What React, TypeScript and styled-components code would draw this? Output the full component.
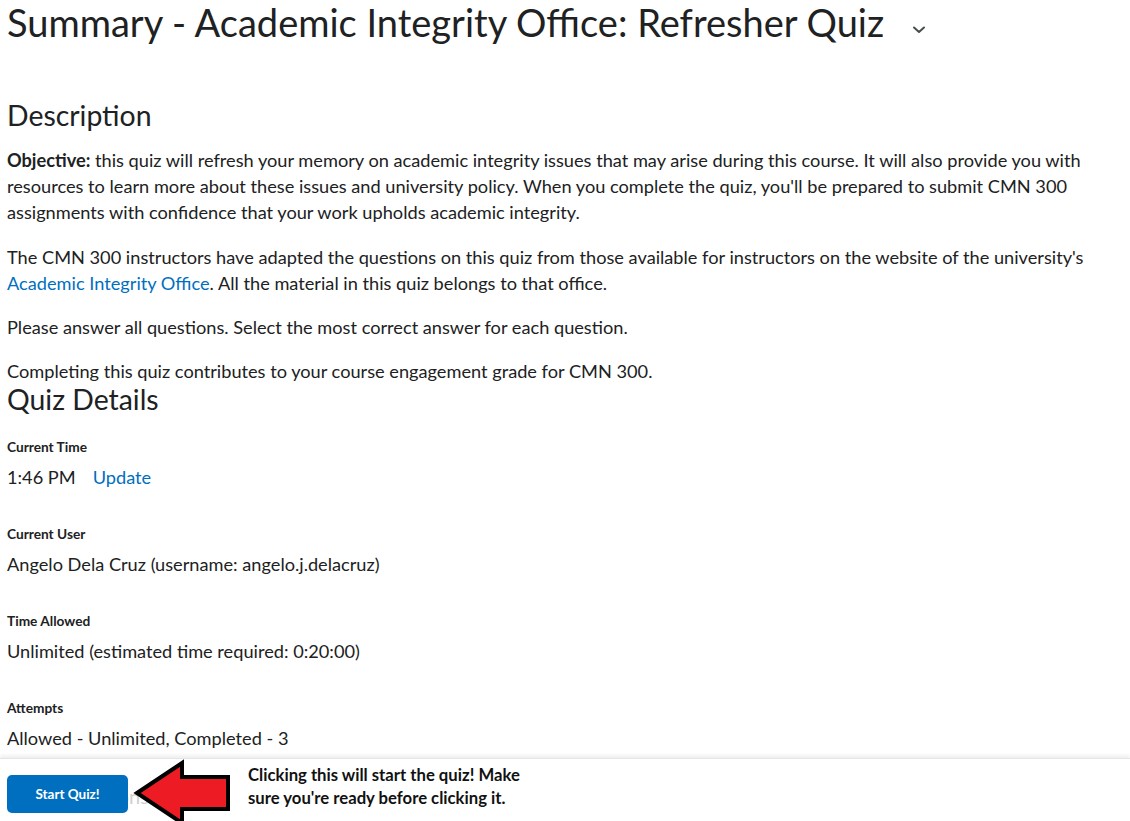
import styled, { createGlobalStyle } from 'styled-components';

const GlobalStyle = createGlobalStyle`
  html, body {
    margin: 0;
    padding: 0;
    background: #ffffff;
  }
  body {
    font-family: Lato, "Open Sans", sans-serif;
    color: #202122;
  }
  * {
    box-sizing: border-box;
  }
`;

const Page = styled.div`
  display: flex;
  flex-direction: column;
  height: 821px;
  overflow: hidden;
`;

const Content = styled.main`
  flex: 1;
  overflow: hidden;
  padding: 0 14px 0 7px;
`;

const TitleRow = styled.div`
  display: flex;
  align-items: center;
  gap: 28px;
  height: 44px;
`;

const Title = styled.h1`
  margin: 0;
  font-size: 38px;
  font-weight: 400;
  line-height: 44px;
  color: #202122;
  white-space: nowrap;
`;

const Chevron = styled.svg`
  width: 14px;
  height: 10px;
  margin-top: 16px;
`;

const SectionTitle = styled.h2<{ $top: number }>`
  margin: ${p => p.$top}px 0 0 0;
  font-size: 28.4px;
  font-weight: 400;
  line-height: 34px;
  color: #202122;
`;

const Para = styled.p<{ $top: number }>`
  margin: ${p => p.$top}px 0 0 0;
  font-size: 18.2px;
  line-height: 26px;
  color: #202122;
`;

const Link = styled.a`
  color: #006fbf;
  text-decoration: none;
`;

const Field = styled.div`
  display: flex;
  flex-direction: column;
  margin-top: 21px;
  & + & {
    margin-top: 34px;
  }
`;

const Label = styled.div`
  font-size: 13.7px;
  font-weight: 700;
  line-height: 20px;
  color: #202122;
`;

const Value = styled.div`
  display: flex;
  gap: 17px;
  font-size: 18.2px;
  line-height: 26px;
  margin-top: 7px;
  white-space: nowrap;
`;

const Footer = styled.footer`
  position: relative;
  flex: 0 0 63px;
  height: 63px;
  background: #ffffff;
  border-top: 1px solid #e3e5e8;
  box-shadow: 0 -3px 3px rgba(0, 0, 0, 0.06);
  display: flex;
  align-items: flex-start;
  padding: 16px 7px 0;
`;

const Ghost = styled.span`
  position: absolute;
  left: 45px;
  top: 25px;
  font-size: 20px;
  line-height: 24px;
  color: #cfcfcf;
`;

const StartButton = styled.button`
  position: relative;
  flex: 0 0 121px;
  height: 38px;
  border: none;
  border-radius: 5px;
  background: #006fbf;
  color: #ffffff;
  font-family: Lato, "Open Sans", sans-serif;
  font-size: 13.5px;
  font-weight: 700;
  cursor: pointer;
`;

const Arrow = styled.svg`
  position: absolute;
  left: 133px;
  top: 0;
  width: 100px;
  height: 68px;
  overflow: visible;
`;

const Note = styled.div`
  margin-left: 120px;
  margin-top: -11px;
  font-family: Lato, "Open Sans", sans-serif;
  font-size: 16.7px;
  font-weight: 700;
  line-height: 23px;
  color: #111;
  white-space: nowrap;
`;

const App = () => {
  return (
    <>
      <GlobalStyle />
      <Page>
        <Content>
          <TitleRow>
            <Title>Summary - Academic Integrity Office: Refresher Quiz</Title>
            <Chevron viewBox="0 0 14 10">
              <path d="M2 2.5 L7 7 L12 2.5" fill="none" stroke="#494c4e" strokeWidth="2" strokeLinecap="round" strokeLinejoin="round" />
            </Chevron>
          </TitleRow>
          <SectionTitle $top={54}>Description</SectionTitle>
          <Para $top={15}>
            <b>Objective:</b> this quiz will refresh your memory on academic integrity issues that may arise during this course. It will also provide you with resources to learn more about these issues and university policy. When you complete the quiz, you'll be prepared to submit CMN 300 assignments with confidence that your work upholds academic integrity.
          </Para>
          <Para $top={19}>
            The CMN 300 instructors have adapted the questions on this quiz from those available for instructors on the website of the university's <Link href="#">Academic Integrity Office</Link>. All the material in this quiz belongs to that office.
          </Para>
          <Para $top={18}>Please answer all questions. Select the most correct answer for each question.</Para>
          <Para $top={18}>Completing this quiz contributes to your course engagement grade for CMN 300.</Para>
          <SectionTitle $top={-2}>Quiz Details</SectionTitle>
          <Field>
            <Label>Current Time</Label>
            <Value>
              <span>1:46 PM</span>
              <Link href="#">Update</Link>
            </Value>
          </Field>
          <Field>
            <Label>Current User</Label>
            <Value>Angelo Dela Cruz (username: angelo.j.delacruz)</Value>
          </Field>
          <Field>
            <Label>Time Allowed</Label>
            <Value>Unlimited (estimated time required: 0:20:00)</Value>
          </Field>
          <Field>
            <Label>Attempts</Label>
            <Value>Allowed - Unlimited, Completed - 3</Value>
          </Field>
        </Content>
        <Footer>
          <Ghost>Instructions</Ghost>
          <StartButton>Start Quiz!</StartButton>
          <Arrow viewBox="0 0 100 68">
            <polygon
              points="4,34 49,4 49,18 95,18 95,50 49,50 49,64"
              fill="#ed1c24"
              stroke="#000"
              strokeWidth="4"
              strokeLinejoin="miter"
            />
          </Arrow>
          <Note>
            Clicking this will start the quiz! Make
            <br />
            sure you're ready before clicking it.
          </Note>
        </Footer>
      </Page>
    </>
  );
};

export default App;
